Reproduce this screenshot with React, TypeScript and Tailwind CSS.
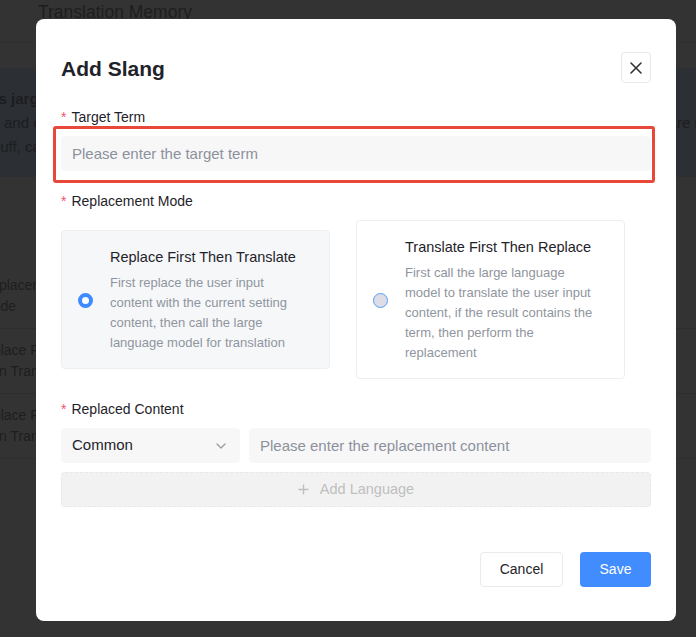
import React from 'react'

const Label: React.FC<{ text: string }> = ({ text }) => (
    <div className="flex items-center text-[14px] leading-5 text-[#1f2329]">
        <span className="mr-[5px] text-[#f1546a]">*</span>
        {text}
    </div>
)

interface ModeCardProps {
    title: string
    desc: string
    selected?: boolean
}

const ModeCard: React.FC<ModeCardProps> = ({ title, desc, selected }) => (
    <div
        className={`flex w-[269px] items-center rounded-[4px] border border-[#eceef1] pb-[15px] pl-[16px] pr-[25px] pt-[16px] ${selected ? 'bg-[#f6f7f9]' : 'bg-white'}`}
    >
        {selected ? (
            <span className="h-[15px] w-[15px] shrink-0 rounded-full border-[4px] border-[#3e8bff] bg-white" />
        ) : (
            <span className="h-[15px] w-[15px] shrink-0 rounded-full border border-[#5a9bf6] bg-[#dcdde5]" />
        )}
        <div className="ml-[17px] flex-1">
            <div className="text-[14.5px] leading-5 text-[#1f2329]">{title}</div>
            <p className="mt-[6px] text-[13px] leading-5 text-[#8f959e]">{desc}</p>
        </div>
    </div>
)

export default function App() {
    return (
        <div
            className="relative h-[637px] w-[696px] overflow-hidden bg-[#333333]"
            style={{ fontFamily: '"Liberation Sans", Arial, sans-serif' }}
        >
            {/* Dimmed page behind the dialog */}
            <div className="h-[43px] border-b border-[#2f2f2f] pl-[38px] text-[17.5px] leading-6 text-[#1e1e1e]">
                Translation Memory
            </div>
            <div className="mt-[25px] h-[109px] overflow-hidden whitespace-nowrap bg-[#2c2f34] pt-[19px] text-[15px] leading-6 text-[#1c1d1f]">
                <div className="ml-[-37px] font-bold">Terms jargon library</div>
                <div className="flex justify-between">
                    <span className="ml-[-46px]">Slangs and custom phrases</span>
                    <span className="mr-[-56px]">are replaced</span>
                </div>
                <div className="ml-[-69px]">Industry stuff, catchphrases</div>
            </div>
            <div className="mt-[87px] text-[14px] leading-[21px] text-[#1e1e1e]">
                <div className="flex h-[65px] items-center border-b border-[#2e2e2e]">
                    <div className="ml-[-19px] w-[104px]">Replacement Mode</div>
                </div>
                <div className="flex h-[65px] items-center border-b border-[#2e2e2e]">
                    <div className="ml-[-25px] w-[104px]">Replace First Then Translate</div>
                </div>
                <div className="flex h-[65px] items-center border-b border-[#2e2e2e]">
                    <div className="ml-[-25px] w-[104px]">Replace First Then Translate</div>
                </div>
            </div>

            {/* Dialog */}
            <div className="absolute left-[36px] top-[19px] w-[640px] rounded-[8px] bg-white px-[25px] pb-[34px] pt-[33px]">
                <div className="flex h-[31px] items-center justify-between">
                    <h2 className="mt-[2px] text-[21px] font-bold text-[#1f2329]">Add Slang</h2>
                    <button className="flex h-[31px] w-[30px] items-center justify-center rounded-[4px] border border-[#e8e8e8]">
                        <svg width="12" height="12" viewBox="0 0 12 12" fill="none">
                            <path d="M1 1L11 11M11 1L1 11" stroke="#333" strokeWidth="1.6" strokeLinecap="round" />
                        </svg>
                    </button>
                </div>

                <div className="mt-[24px]">
                    <Label text="Target Term" />
                    <div className="relative mt-[9px]">
                        <input
                            className="h-[35px] w-full rounded-[4px] bg-[#f7f7f8] px-[11px] text-[15px] text-[#1f2329] outline-none placeholder:text-[#8c919c]"
                            placeholder="Please enter the target term"
                        />
                        <div className="pointer-events-none absolute -bottom-3 -left-2 -right-1 -top-[10px] rounded-[3px] border-[3px] border-[#e8483a]" />
                    </div>
                </div>

                <div className="mt-[20px]">
                    <Label text="Replacement Mode" />
                    <div className="mt-[9px] flex items-center gap-[26px]">
                        <ModeCard
                            selected
                            title="Replace First Then Translate"
                            desc="First replace the user input content with the current setting content, then call the large language model for translation"
                        />
                        <ModeCard
                            title="Translate First Then Replace"
                            desc="First call the large language model to translate the user input content, if the result contains the term, then perform the replacement"
                        />
                    </div>
                </div>

                <div className="mt-[20px]">
                    <Label text="Replaced Content" />
                    <div className="mt-[9px] flex gap-[9px]">
                        <div className="flex h-[35px] w-[179px] items-center justify-between rounded-[4px] bg-[#f7f7f8] pl-[11px] pr-[14px] text-[15px] text-[#1f2329]">
                            Common
                            <svg width="10" height="6" viewBox="0 0 10 6" fill="none">
                                <path d="M1 1L5 5L9 1" stroke="#999" strokeWidth="1.2" strokeLinecap="round" strokeLinejoin="round" />
                            </svg>
                        </div>
                        <input
                            className="h-[35px] flex-1 rounded-[4px] bg-[#f7f7f8] px-[11px] text-[15px] text-[#1f2329] outline-none placeholder:text-[#8c919c]"
                            placeholder="Please enter the replacement content"
                        />
                    </div>
                    <button className="mt-[9px] flex h-[35px] w-full items-center justify-center gap-[11px] rounded-[4px] border border-dashed border-[#e8e8e8] bg-[#f2f2f2] text-[14.5px] text-[#bfbfbf]">
                        <svg width="11" height="11" viewBox="0 0 11 11" fill="none">
                            <path d="M5.5 0.5V10.5M0.5 5.5H10.5" stroke="#bfbfbf" strokeWidth="1.4" />
                        </svg>
                        Add Language
                    </button>
                </div>

                <div className="mt-[45px] flex justify-end gap-[17px]">
                    <button className="h-[35px] w-[83px] rounded-[4px] border border-[#ebebeb] bg-white text-[14px] text-[#1f2329]">
                        Cancel
                    </button>
                    <button className="h-[35px] w-[71px] rounded-[4px] bg-[#418cfe] text-[14px] text-white">Save</button>
                </div>
            </div>
        </div>
    )
}
